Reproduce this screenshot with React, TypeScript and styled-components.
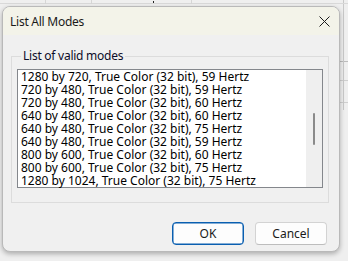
import React from 'react'
import styled, { createGlobalStyle } from 'styled-components'

const GlobalStyle = createGlobalStyle`
  html, body {
    margin: 0;
    padding: 0;
    background: #eeeeee;
  }
  body {
    font-family: 'Noto Sans', 'Segoe UI', sans-serif;
  }
`

// the window behind the dialog: a few faint ruler lines only
const Desktop = styled.div`
  box-sizing: border-box;
  width: 348px;
  height: 261px;
  overflow: hidden;
  padding: 6px 0 0 2px;
  background:
    linear-gradient(#d6d6d6, #d6d6d6) 45px 0 / 1px 4px no-repeat,
    linear-gradient(#d6d6d6, #d6d6d6) 91px 0 / 1px 4px no-repeat,
    linear-gradient(#d6d6d6, #d6d6d6) 191px 0 / 1px 4px no-repeat,
    linear-gradient(#d9d9d9, #d9d9d9) 0 3px / 348px 1px no-repeat,
    linear-gradient(#222, #222) 153px 1px / 1px 3px no-repeat,
    linear-gradient(#c8c8c8, #c8c8c8) 343px 0 / 1px 110px no-repeat,
    linear-gradient(#bcbcbc, #bcbcbc) 340px 61px / 8px 1px no-repeat,
    linear-gradient(#cfcfcf, #cfcfcf) 340px 80px / 8px 1px no-repeat,
    linear-gradient(#cfcfcf, #cfcfcf) 340px 102px / 8px 1px no-repeat,
    #efefef;
`

const Dialog = styled.div`
  box-sizing: border-box;
  width: 338px;
  height: 246px;
  display: flex;
  flex-direction: column;
  border: 1px solid #b9b9b9;
  border-radius: 8px;
  overflow: hidden;
  background: #f0f0f0;
  box-shadow: 0 2px 5px rgba(0, 0, 0, 0.28);
`

const TitleBar = styled.div`
  height: 28px;
  flex: none;
  display: flex;
  align-items: center;
  justify-content: space-between;
  padding: 0 9px 0 7px;
  background: #f3f3e9;
  color: #1a1a1a;
  font-size: 12px;
  letter-spacing: -0.25px;
`

const CloseIcon = () => (
  <svg width="11" height="11" viewBox="0 0 11 11">
    <path d="M0.5 0.5 L10.5 10.5 M10.5 0.5 L0.5 10.5" stroke="#1c1c1c" strokeWidth="1" />
  </svg>
)

const Body = styled.div`
  flex: 1;
  display: flex;
  flex-direction: column;
  padding: 14px 10px 5px 8px;
`

const Group = styled.fieldset`
  margin: 0;
  padding: 0 5px 14px 5px;
  border: 1px solid #dcdcdc;
  min-width: 0;
`

const GroupLabel = styled.legend`
  margin-left: 4px;
  padding: 0 2px;
  font-size: 12px;
  line-height: 14px;
  letter-spacing: -0.25px;
  color: #0c0c28;
`

const ListBox = styled.div`
  margin-top: 6px;
  height: 117px;
  display: flex;
  border: 1px solid #84878c;
  background: #ffffff;
`

const Items = styled.ul`
  flex: 1;
  margin: 0;
  padding: 0 0 0 3px;
  list-style: none;
`

const Item = styled.li`
  font-size: 12px;
  line-height: 13px;
  height: 13px;
  color: #000;
  white-space: nowrap;
`

const Scrollbar = styled.div`
  width: 16px;
  flex: none;
  display: flex;
  justify-content: center;
  background: #efefef;
  padding-top: 43px;
  box-sizing: border-box;
`

const Thumb = styled.div`
  width: 2px;
  height: 32px;
  border-radius: 1px;
  background: #8a8a8a;
`

const Buttons = styled.div`
  margin-top: 19px;
  display: flex;
  justify-content: flex-end;
  gap: 11px;
  padding-right: 2px;
`

const Button = styled.button<{ $primary?: boolean }>`
  box-sizing: border-box;
  width: 72px;
  height: 23px;
  padding: 0;
  font-family: inherit;
  font-size: 12px;
  color: #1a1a1a;
  background: #fdfdfd;
  border-radius: 4px;
  border: 1px solid ${({ $primary }) => ($primary ? '#0a5fb0' : '#d3d3d3')};
  border-bottom-color: ${({ $primary }) => ($primary ? '#0a5fb0' : '#bdbdbd')};
  box-shadow: ${({ $primary }) => ($primary ? 'inset 0 0 0 0.5px #0a5fb0' : 'none')};
`

const modes = [
  '1280 by 720, True Color (32 bit), 59 Hertz',
  '720 by 480, True Color (32 bit), 59 Hertz',
  '720 by 480, True Color (32 bit), 60 Hertz',
  '640 by 480, True Color (32 bit), 60 Hertz',
  '640 by 480, True Color (32 bit), 75 Hertz',
  '640 by 480, True Color (32 bit), 59 Hertz',
  '800 by 600, True Color (32 bit), 60 Hertz',
  '800 by 600, True Color (32 bit), 75 Hertz',
  '1280 by 1024, True Color (32 bit), 75 Hertz',
]

const App = () => (
  <>
    <GlobalStyle />
    <Desktop>
      <Dialog>
        <TitleBar>
          <span>List All Modes</span>
          <CloseIcon />
        </TitleBar>
        <Body>
          <Group>
            <GroupLabel>List of valid modes</GroupLabel>
            <ListBox>
              <Items>
                {modes.map((m) => (
                  <Item key={m}>{m}</Item>
                ))}
              </Items>
              <Scrollbar>
                <Thumb />
              </Scrollbar>
            </ListBox>
          </Group>
          <Buttons>
            <Button $primary>OK</Button>
            <Button>Cancel</Button>
          </Buttons>
        </Body>
      </Dialog>
    </Desktop>
  </>
)

export default App
